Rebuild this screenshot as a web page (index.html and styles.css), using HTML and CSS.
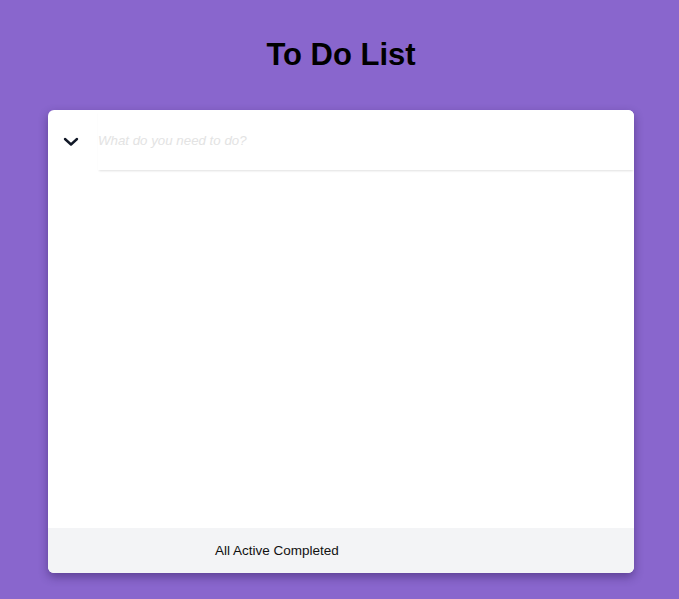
FILE: index.html
```html
<!DOCTYPE html>
<html>
<head>
<meta charset="utf-8">
<link rel="stylesheet" href="styles.css">
</head>
<body>
<div class="app">
  <h1 class="title">To Do List</h1>
  <div class="card">
    <div class="header">
      <button class="toggle" aria-label="toggle all">
        <svg width="16" height="10" viewBox="0 0 16 10"><path d="M2 2 L8 7.5 L14 2" fill="none" stroke="#111827" stroke-width="2.4" stroke-linecap="round" stroke-linejoin="round"/></svg>
      </button>
      <input class="new-todo" type="text" placeholder="What do you need to do?">
    </div>
    <div class="list"></div>
    <div class="footer">
      <span class="filters">All Active Completed</span>
    </div>
  </div>
</div>
</body>
</html>
```
FILE: styles.css
```css
html, body {
  margin: 0;
  padding: 0;
}
body {
  background: #8966cd;
  font-family: "Liberation Sans", Arial, sans-serif;
  height: 599px;
  overflow: hidden;
}
.app {
  width: 586px;
  margin-left: 48px;
  padding-top: 35px;
}
.title {
  margin: 0 0 35px 0;
  text-align: center;
  font-size: 31px;
  font-weight: bold;
  line-height: 40px;
  color: #000;
}
.card {
  background: #fff;
  border-radius: 6px;
  box-shadow: 0 4px 10px rgba(40, 20, 80, 0.45);
  height: 463px;
  display: flex;
  flex-direction: column;
  overflow: hidden;
}
.header {
  display: flex;
  align-items: stretch;
  height: 60px;
  flex: none;
}
.toggle {
  width: 50px;
  border: none;
  background: transparent;
  padding: 0;
  display: flex;
  align-items: center;
  justify-content: center;
  padding-top: 4px;
  padding-right: 4px;
}
.new-todo {
  flex: 1;
  border: none;
  outline: none;
  font-family: "Liberation Sans", Arial, sans-serif;
  font-size: 13.3px;
  font-style: italic;
  padding: 0;
  margin: 0;
  box-shadow: 0 2px 2px -1px rgba(0, 0, 0, 0.12);
  background: #fff;
  color: #333;
}
.new-todo::placeholder {
  color: #e3e3e3;
}
.list {
  flex: 1;
}
.footer {
  height: 45px;
  flex: none;
  background: #f3f4f6;
  display: flex;
  align-items: center;
  padding-left: 167px;
  font-size: 13.5px;
  color: #111;
}
```
